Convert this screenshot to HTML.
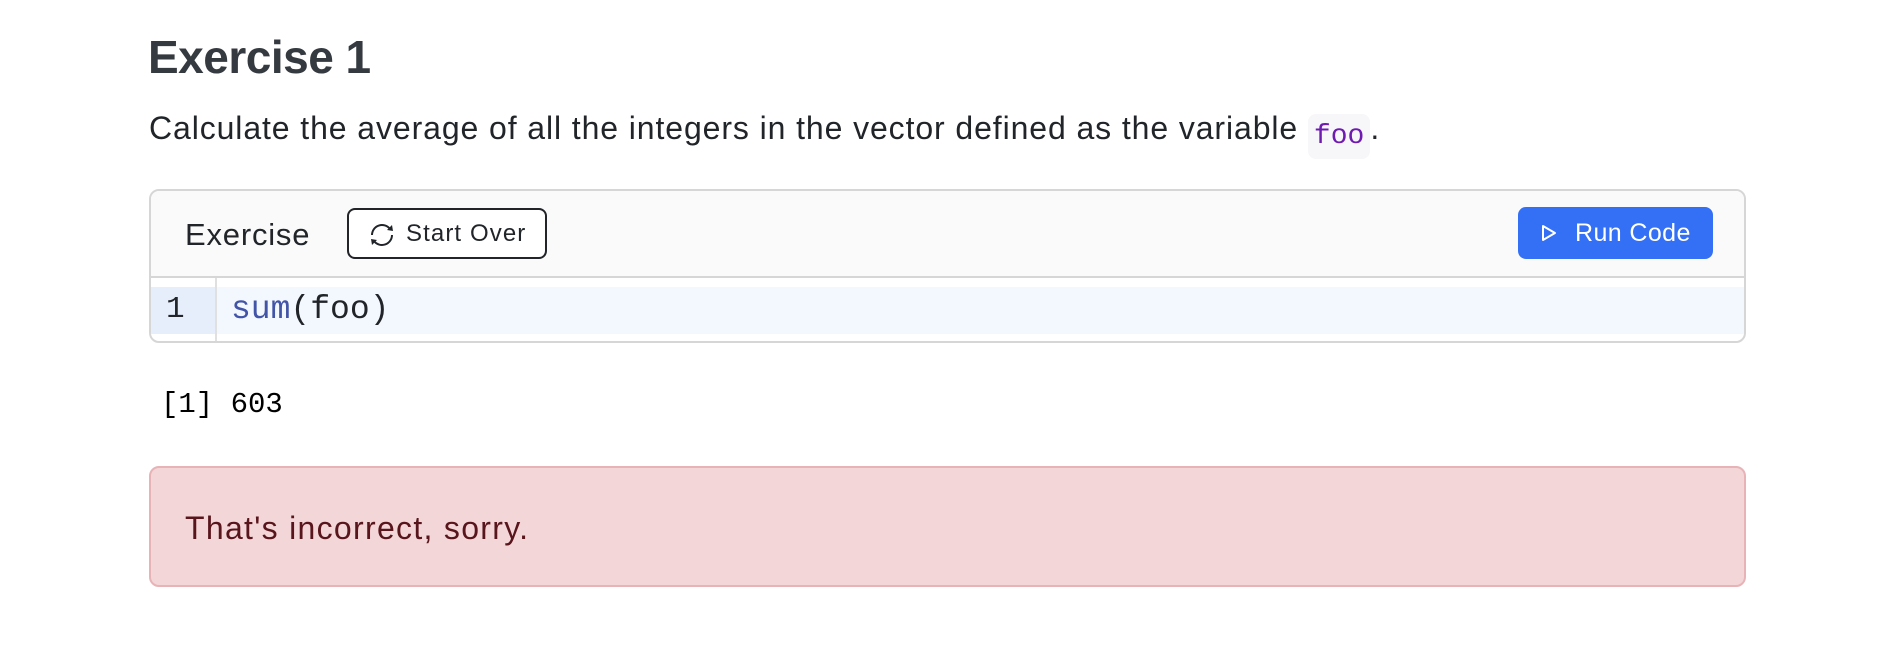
<!DOCTYPE html>
<html><head><meta charset="utf-8"><style>
*{margin:0;padding:0;box-sizing:border-box}
body{width:1898px;height:662px;background:#fff;position:relative;overflow:hidden;font-family:"Liberation Sans",sans-serif;color:#212529}
.a{position:absolute;white-space:nowrap}
.mono{font-family:"Liberation Mono",monospace}
</style></head><body>
<div class="a" style="left:148px;top:29px;font-size:46px;font-weight:bold;color:#343a40;letter-spacing:-0.5px;line-height:56px">Exercise 1</div>
<div class="a" style="left:149px;top:108px;font-size:32px;letter-spacing:0.9px;line-height:40px">Calculate the average of all the integers in the vector defined as the variable <span class="mono" style="display:inline-block;background:#f7f7fa;color:#6f1ab1;border-radius:8px;padding:0 6px;font-size:28px;letter-spacing:0;line-height:45px;vertical-align:-4px">foo</span>.</div>

<div class="a" style="left:149px;top:189px;width:1597px;height:154px;border:2px solid #d6d6d6;border-radius:10px;overflow:hidden;background:#fff">
  <div style="position:absolute;left:0;top:0;right:0;height:87px;background:#fafafa;border-bottom:2px solid #d6d6d6"></div>
  <div class="a" style="left:34px;top:26px;font-size:31px;letter-spacing:0.8px;line-height:36px">Exercise</div>
  <div class="a" style="left:196px;top:17px;width:200px;height:51px;border:2px solid #212529;border-radius:8px;background:#fff"></div>
  <svg class="a" style="left:217px;top:31px" width="28" height="26" viewBox="0 0 28 26"><path d="M4 13a10 10 0 0 1 18-6" fill="none" stroke="#212529" stroke-width="2"/><path d="M24 13a10 10 0 0 1 -18 6" fill="none" stroke="#212529" stroke-width="2"/><path d="M19 8l6 1l-1-6z" fill="#212529"/><path d="M9 18l-6-1l1 6z" fill="#212529"/></svg>
  <div class="a" style="left:255px;top:28px;font-size:24px;letter-spacing:1.1px;line-height:30px">Start Over</div>
  <div class="a" style="left:1367px;top:16px;width:195px;height:52px;background:#3370f5;border-radius:8px"></div>
  <svg class="a" style="left:1388px;top:32px" width="20" height="20" viewBox="0 0 20 20"><path d="M4 3v14l12-7z" fill="none" stroke="#fff" stroke-width="2" stroke-linejoin="round"/></svg>
  <div class="a" style="left:1424px;top:26px;font-size:25px;letter-spacing:0.4px;line-height:32px;color:#fff">Run Code</div>
  <div style="position:absolute;left:0;top:96px;right:0;height:47px;background:#f3f7fe"></div>
  <div style="position:absolute;left:0;top:96px;width:64px;height:47px;background:#e6edfb"></div>
  <div style="position:absolute;left:64px;top:87px;width:2px;height:70px;background:#e0e0e0"></div>
  <div class="a mono" style="left:15px;top:98px;font-size:31px;line-height:42px;color:#212529">1</div>
  <div class="a mono" style="left:80px;top:98px;font-size:33px;line-height:42px;color:#212529"><span style="color:#4254a7">sum</span>(foo)</div>
</div>

<div class="a mono" style="left:161px;top:388px;font-size:29px;line-height:34px;color:#000">[1] 603</div>

<div class="a" style="left:149px;top:466px;width:1597px;height:121px;background:#f3d6d8;border:2px solid #e8b3b7;border-radius:10px"></div>
<div class="a" style="left:185px;top:510px;font-size:32px;letter-spacing:1.3px;line-height:36px;color:#58151c">That's incorrect, sorry.</div>
</body></html>
